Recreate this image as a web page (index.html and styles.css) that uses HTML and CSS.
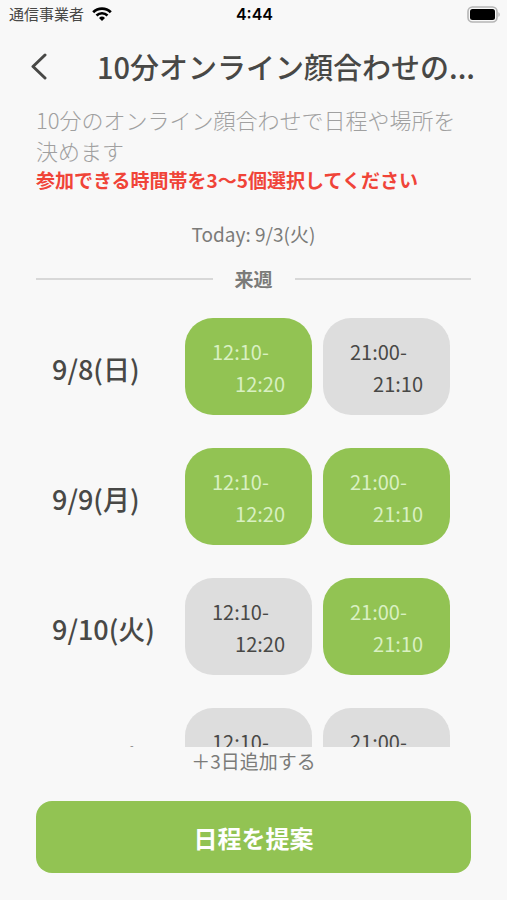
FILE: index.html
```html
<!DOCTYPE html>
<html lang="ja">
<head>
<meta charset="utf-8">
<meta name="viewport" content="width=device-width, initial-scale=1">
<title>日程を提案</title>
<link rel="stylesheet" href="styles.css">
</head>
<body>
<div class="screen">
  <div class="status">
    <div class="carrier">
      <span>通信事業者</span>
      <svg width="20" height="14" viewBox="0 0 20 14" aria-hidden="true">
        <path d="M1.2 5.2a12.6 12.6 0 0 1 17.6 0" fill="none" stroke="#000" stroke-width="2.8"/>
        <path d="M4.5 8.5a7.9 7.9 0 0 1 11 0" fill="none" stroke="#000" stroke-width="2.6"/>
        <path d="M10 14l-3-3a4.3 4.3 0 0 1 6 0z"/>
      </svg>
    </div>
    <span class="clock">4:44</span>
    <svg class="battery" width="34" height="17" viewBox="0 0 34 17" aria-hidden="true">
      <rect x="2" y="1" width="29" height="15" rx="4.5" fill="none" stroke="#b5b5b5" stroke-width="1.6"/>
      <rect x="4" y="3" width="25" height="11" rx="2.5"/>
      <path d="M32.4 6.2c1.8.6 1.8 4 0 4.6z" fill="#b5b5b5"/>
    </svg>
  </div>

  <header class="header">
    <button class="back" type="button" aria-label="戻る">
      <svg width="18" height="28" viewBox="0 0 18 28" aria-hidden="true">
        <path d="M15 3L3 14.5 15 26" fill="none" stroke="#484846" stroke-width="3" stroke-linecap="round" stroke-linejoin="round"/>
      </svg>
    </button>
    <h1 class="title">10分オンライン顔合わせの...</h1>
  </header>

  <main class="content">
    <p class="lead">10分のオンライン顔合わせで日程や場所を決めます</p>
    <p class="notice">参加できる時間帯を3〜5個選択してください</p>
    <p class="today">Today: 9/3(火)</p>
    <h2 class="week">来週</h2>

    <div class="days">
      <section class="day">
        <h3 class="date">9/8(日)</h3>
        <button class="slot selected" type="button" aria-pressed="true"><span>12:10-</span><span class="end">12:20</span></button>
        <button class="slot" type="button" aria-pressed="false"><span>21:00-</span><span class="end">21:10</span></button>
      </section>
      <section class="day">
        <h3 class="date">9/9(月)</h3>
        <button class="slot selected" type="button" aria-pressed="true"><span>12:10-</span><span class="end">12:20</span></button>
        <button class="slot selected" type="button" aria-pressed="true"><span>21:00-</span><span class="end">21:10</span></button>
      </section>
      <section class="day">
        <h3 class="date">9/10(火)</h3>
        <button class="slot" type="button" aria-pressed="false"><span>12:10-</span><span class="end">12:20</span></button>
        <button class="slot selected" type="button" aria-pressed="true"><span>21:00-</span><span class="end">21:10</span></button>
      </section>
      <section class="day">
        <h3 class="date">9/11(水)</h3>
        <button class="slot" type="button" aria-pressed="false"><span>12:10-</span><span class="end">12:20</span></button>
        <button class="slot" type="button" aria-pressed="false"><span>21:00-</span><span class="end">21:10</span></button>
      </section>
    </div>

    <button class="more" type="button">＋3日追加する</button>
    <button class="submit" type="button">日程を提案</button>
  </main>
</div>
</body>
</html>
```
FILE: styles.css
```css
* {
  box-sizing: border-box;
}

body {
  margin: 0;
  background: #f8f8f8;
  color: #484846;
  font-family: "Noto Sans CJK JP", sans-serif;
}

h1, h2, h3, p {
  margin: 0;
}

button {
  border: 0;
  padding: 0;
  background: none;
  color: inherit;
  font-family: inherit;
  cursor: pointer;
}

svg {
  display: block;
}

.screen {
  display: flex;
  flex-direction: column;
  height: 100vh;
}

.status {
  display: grid;
  grid-template-columns: 1fr auto 1fr;
  align-items: center;
  height: 28px;
  padding: 0 7px 0 9px;
}

.carrier {
  display: flex;
  align-items: center;
  gap: 8px;
  font-size: 15px;
  line-height: 28px;
}

.clock {
  color: #000;
  font-family: Inter, sans-serif;
  font-size: 16px;
  font-weight: 600;
}

.battery {
  justify-self: end;
}

.header {
  display: flex;
  align-items: center;
  height: 76px;
  padding: 0 28px;
}

.back {
  width: 69px;
  height: 44px;
  flex: none;
}

.back svg {
  margin-left: 2px;
}

.title {
  font-size: 29px;
  font-weight: 500;
  line-height: 40px;
  white-space: nowrap;
}

.content {
  display: flex;
  flex: 1;
  flex-direction: column;
  min-height: 0;
  padding: 0 36px 27px;
}

.lead {
  color: #a0a0a0;
  font-size: 22px;
  font-weight: 300;
  line-height: 31px;
}

.notice {
  color: #f04438;
  font-size: 19px;
  font-weight: 700;
  line-height: 28px;
}

.today {
  margin-top: 26px;
  color: #7b7b79;
  font-size: 19px;
  line-height: 28px;
  text-align: center;
}

.week {
  display: flex;
  align-items: center;
  gap: 22px;
  margin-top: 17px;
  color: #7b7b79;
  font-size: 19px;
  font-weight: 700;
  line-height: 28px;
}

.week::before,
.week::after {
  flex: 1;
  height: 2px;
  background: #d8d8d8;
  content: "";
}

.days {
  display: flex;
  flex: 1;
  flex-direction: column;
  gap: 33px;
  min-height: 0;
  margin-top: 25px;
  overflow: hidden;
}

.day {
  display: grid;
  flex: none;
  grid-template-columns: 122px 1fr 1fr;
  column-gap: 11px;
  align-items: center;
  padding: 0 21px 0 16px;
}

.date {
  padding-top: 4px;
  font-size: 27px;
  font-weight: 500;
  line-height: 40px;
  white-space: nowrap;
}

.slot {
  display: flex;
  flex-direction: column;
  height: 97px;
  padding: 18px 27px 15px;
  border-radius: 28px;
  background: #dddddd;
  font-size: 20px;
  line-height: 32px;
  text-align: left;
}

.slot .end {
  align-self: flex-end;
}

.selected {
  background: #92c353;
  color: #d9f0c2;
}

.more {
  align-self: center;
  color: #7b7b79;
  font-size: 19px;
  line-height: 28px;
}

.submit {
  flex: none;
  height: 72px;
  margin-top: 26px;
  border-radius: 16px;
  background: #92c353;
  color: #fff;
  font-size: 24px;
  font-weight: 700;
}
```
